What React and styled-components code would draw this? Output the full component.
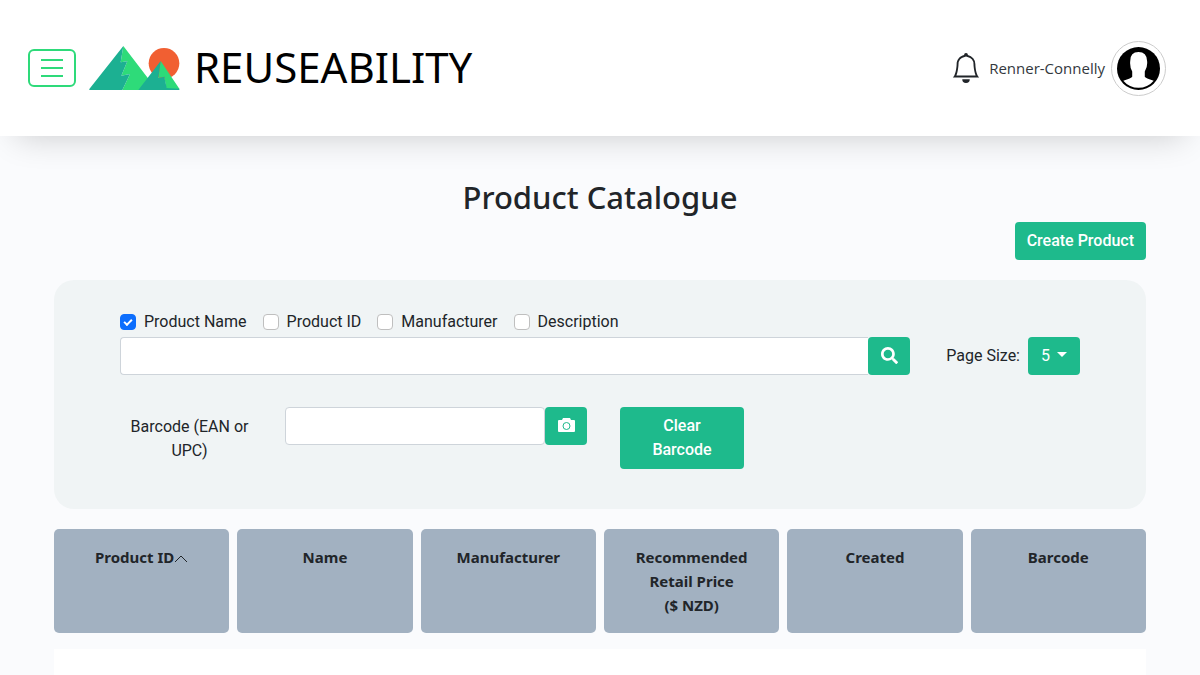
import React, { useState } from "react";
import styled, { createGlobalStyle } from "styled-components";
import { BsBell } from "react-icons/bs";
import { FaSearch } from "react-icons/fa";

const GlobalStyle = createGlobalStyle`
  *, *::before, *::after { box-sizing: border-box; }
  body {
    margin: 0;
    background: #fafbfd;
    color: #212529;
    font-family: Roboto, "Liberation Sans", sans-serif;
    font-size: 16px;
    line-height: 24px;
  }
`;

const uiFont = `"Noto Sans", "Open Sans", sans-serif`;
const green = "#1eba8c";

const Page = styled.div`
  display: flex;
  flex-direction: column;
  min-height: 100vh;
`;

const Header = styled.header`
  display: flex;
  align-items: center;
  justify-content: space-between;
  height: 136px;
  padding: 0 34px 0 28px;
  background: #fff;
  box-shadow: 0 16px 32px -16px rgba(0, 0, 0, 0.2);
`;

const HeaderGroup = styled.div`
  display: flex;
  align-items: center;
`;

const MenuButton = styled.button`
  display: flex;
  align-items: center;
  justify-content: center;
  width: 48px;
  height: 38px;
  padding: 0;
  border: 2px solid #2eda7a;
  border-radius: 6px;
  background: transparent;
  color: #2eda7a;
  cursor: pointer;
`;

const Brand = styled.a`
  display: flex;
  align-items: center;
  gap: 14px;
  margin-left: 13px;
  color: #000;
  font-family: ${uiFont};
  font-size: 42px;
  line-height: 56px;
  text-decoration: none;
`;

const BrandName = styled.span`
  padding-bottom: 2px;
`;

const BellButton = styled.button`
  display: flex;
  padding: 0;
  border: 0;
  background: transparent;
  color: #212529;
  font-size: 30px;
  cursor: pointer;
`;

const UserLink = styled.a`
  display: flex;
  align-items: center;
  gap: 6px;
  margin-left: 8px;
  color: #33383d;
  font-family: "Open Sans", "Noto Sans", sans-serif;
  font-size: 15px;
  text-decoration: none;
`;

const AvatarFrame = styled.span`
  display: flex;
  align-items: center;
  justify-content: center;
  width: 55px;
  height: 55px;
  border: 1px solid #ccc;
  border-radius: 50%;
`;

const Main = styled.main`
  display: flex;
  flex: 1;
  flex-direction: column;
  width: 100%;
  max-width: 1140px;
  margin: 0 auto;
  padding: 42px 24px 0;
`;

const Title = styled.h1`
  margin: 0 0 6px;
  font-family: ${uiFont};
  font-size: 31px;
  font-weight: 500;
  line-height: 38px;
  text-align: center;
`;

const Actions = styled.div`
  display: flex;
  justify-content: flex-end;
  margin-bottom: 20px;
`;

const Button = styled.button`
  width: ${(p) => p.$width || "auto"};
  padding: 7px 12px;
  border: 0;
  border-radius: 4px;
  background: ${green};
  color: #fff;
  font: inherit;
  font-weight: ${(p) => p.$weight || 400};
  cursor: pointer;
`;

const IconButton = styled.button`
  display: flex;
  flex: none;
  align-items: center;
  justify-content: center;
  width: 42px;
  height: 38px;
  padding: 0 0 2px;
  border: 0;
  border-radius: 4px;
  background: ${green};
  color: #fff;
  font-size: 17px;
  cursor: pointer;
`;

const Panel = styled.section`
  display: flex;
  flex-direction: column;
  gap: 32px;
  padding: 30px 66px 40px;
  border-radius: 20px;
  background: #f0f4f5;
`;

const SearchRow = styled.form`
  display: flex;
  align-items: flex-end;
  gap: 36px;
`;

const SearchArea = styled.div`
  flex: 1;
`;

const Filters = styled.div`
  display: flex;
  gap: 16px;
  margin-bottom: 3px;
`;

const CheckLabel = styled.label`
  display: flex;
  align-items: center;
  gap: 8px;
`;

const Checkbox = styled.input`
  display: grid;
  place-content: center;
  width: 16px;
  height: 16px;
  margin: 0;
  border: 1px solid #bfbfbf;
  border-radius: 4px;
  background: #fff;
  appearance: none;

  &:checked {
    border-color: #0d6efd;
    background: #0d6efd;
  }

  &:checked::before {
    content: "";
    width: 8px;
    height: 5px;
    margin-bottom: 2px;
    border: solid #fff;
    border-width: 0 0 2px 2px;
    transform: rotate(-45deg);
  }
`;

const InputGroup = styled.div`
  display: flex;
  width: ${(p) => p.$width || "auto"};
`;

const TextInput = styled.input`
  flex: 1;
  min-width: 0;
  height: 38px;
  padding: 6px 12px;
  border: 1px solid #ced4da;
  border-radius: 4px;
  border-right-width: ${(p) => (p.$joined ? 0 : "1px")};
  border-top-right-radius: ${(p) => (p.$joined ? 0 : "4px")};
  border-bottom-right-radius: ${(p) => (p.$joined ? 0 : "4px")};
  background: #fff;
  font: inherit;
`;

const PageSize = styled.div`
  display: flex;
  align-items: center;
  gap: 8px;
`;

const SelectBox = styled.div`
  position: relative;
`;

const Select = styled.select`
  display: block;
  width: 52px;
  height: 38px;
  padding: 0 13px;
  border: 0;
  border-radius: 4px;
  background: ${green};
  color: #fff;
  font: inherit;
  appearance: none;
  cursor: pointer;
`;

const Caret = styled.svg`
  position: absolute;
  top: 15px;
  right: 13px;
  pointer-events: none;
`;

const BarcodeRow = styled.form`
  display: flex;
  align-items: flex-start;
`;

const BarcodeLabel = styled.label`
  width: 139px;
  margin-right: 26px;
  padding: 8px 8px 6px;
  text-align: center;
`;

const ClearArea = styled.div`
  margin-left: 33px;
`;

const ProductTable = styled.table`
  display: flex;
  flex: 1;
  flex-direction: column;
  gap: 16px;
  margin-top: 20px;
`;

const TableHead = styled.thead`
  display: block;
`;

const HeadRow = styled.tr`
  display: grid;
  grid-template-columns: repeat(6, 1fr);
  gap: 8px;
`;

const HeadCell = styled.th`
  padding: 16px 24px;
  border-radius: 5px;
  background: #a2b1c1;
  font-family: ${uiFont};
  font-size: 15px;
  font-weight: 700;
  text-align: center;
  cursor: pointer;
`;

const TableBody = styled.tbody`
  display: block;
  flex: 1;
  background: #fff;
`;

function Logo() {
  return (
    <svg width="91" height="44" viewBox="267 78 271 132" aria-hidden="true">
      <circle cx="491" cy="130" r="46" fill="#f15f32" />
      <path d="M369 78 470 210H366L389 162 363 167 381 124 361 127Z" fill="#2edb79" />
      <path d="M369 78 361 127 381 124 363 167 389 162 366 210H267V207Z" fill="#1cb092" />
      <path d="M481 123 537 206V208H498L492 170 474 174Z" fill="#2edb79" />
      <path d="M481 123 474 174 492 170 499 204 537 206V210H414Z" fill="#1cb092" />
    </svg>
  );
}

function MenuIcon() {
  return (
    <svg width="22" height="18" viewBox="0 0 22 18" stroke="currentColor" strokeWidth="2" aria-hidden="true">
      <path d="M0 1H22M0 9H22M0 17H22" />
    </svg>
  );
}

function Avatar() {
  return (
    <svg width="43" height="43" viewBox="0 0 130 130" role="img" aria-label="Profile">
      <circle cx="65" cy="65" r="65" fill="#000" />
      <path
        d="M40 42Q40 15 65 15T91 42Q93 60 84 74V90Q86 95 111 102A60 60 0 0 1 19 102Q44 95 46 90V74Q38 60 40 42Z"
        fill="#fff"
      />
    </svg>
  );
}

function CameraIcon() {
  return (
    <svg width="17" height="14" viewBox="0 0 17 14" aria-hidden="true">
      <path d="M1 2H4L5 0H12L13 2H16Q17 2 17 3V13Q17 14 16 14H1Q0 14 0 13V3Q0 2 1 2Z" fill="currentColor" />
      <circle cx="8.5" cy="8" r="3.5" fill="none" stroke={green} />
    </svg>
  );
}

function SortUp() {
  return (
    <svg width="14" height="8" viewBox="0 0 14 8" fill="none" stroke="currentColor" aria-hidden="true">
      <path d="M1 7 7 1 13 7" />
    </svg>
  );
}

const filterNames = ["Product Name", "Product ID", "Manufacturer", "Description"];
const columns = ["Product ID", "Name", "Manufacturer", "Recommended Retail Price ($\u00a0NZD)", "Created", "Barcode"];

export default function App() {
  const [filters, setFilters] = useState(["Product Name"]);
  const toggle = (name) =>
    setFilters((now) => (now.includes(name) ? now.filter((n) => n !== name) : [...now, name]));

  return (
    <Page>
      <GlobalStyle />
      <Header>
        <HeaderGroup>
          <MenuButton type="button" aria-label="Menu"><MenuIcon /></MenuButton>
          <Brand href="#home"><Logo /><BrandName>REUSEABILITY</BrandName></Brand>
        </HeaderGroup>
        <HeaderGroup>
          <BellButton type="button" aria-label="Notifications"><BsBell /></BellButton>
          <UserLink href="#profile">
            Renner-Connelly
            <AvatarFrame><Avatar /></AvatarFrame>
          </UserLink>
        </HeaderGroup>
      </Header>
      <Main>
        <Title>Product Catalogue</Title>
        <Actions><Button type="button" $weight={500}>Create Product</Button></Actions>
        <Panel>
          <SearchRow onSubmit={(e) => e.preventDefault()}>
            <SearchArea>
              <Filters>
                {filterNames.map((name) => (
                  <CheckLabel key={name}>
                    <Checkbox type="checkbox" checked={filters.includes(name)} onChange={() => toggle(name)} />
                    {name}
                  </CheckLabel>
                ))}
              </Filters>
              <InputGroup>
                <TextInput type="search" aria-label="Search products" $joined />
                <IconButton type="submit" aria-label="Search"><FaSearch /></IconButton>
              </InputGroup>
            </SearchArea>
            <PageSize>
              <label htmlFor="page-size">Page Size:</label>
              <SelectBox>
                <Select id="page-size" defaultValue="5">
                  <option>5</option>
                  <option>10</option>
                  <option>15</option>
                </Select>
                <Caret width="10" height="5" viewBox="0 0 10 5" aria-hidden="true">
                  <path d="M0 0H10L5 5Z" fill="#fff" />
                </Caret>
              </SelectBox>
            </PageSize>
          </SearchRow>
          <BarcodeRow onSubmit={(e) => e.preventDefault()}>
            <BarcodeLabel htmlFor="barcode">Barcode (EAN or UPC)</BarcodeLabel>
            <InputGroup $width="302px">
              <TextInput id="barcode" type="text" />
              <IconButton type="button" aria-label="Scan barcode"><CameraIcon /></IconButton>
            </InputGroup>
            <ClearArea><Button type="reset" $width="124px" $weight={500}>Clear Barcode</Button></ClearArea>
          </BarcodeRow>
        </Panel>
        <ProductTable>
          <TableHead>
            <HeadRow>
              {columns.map((name, i) => (
                <HeadCell key={name} scope="col">
                  {name}
                  {i === 0 && <SortUp />}
                </HeadCell>
              ))}
            </HeadRow>
          </TableHead>
          <TableBody />
        </ProductTable>
      </Main>
    </Page>
  );
}
